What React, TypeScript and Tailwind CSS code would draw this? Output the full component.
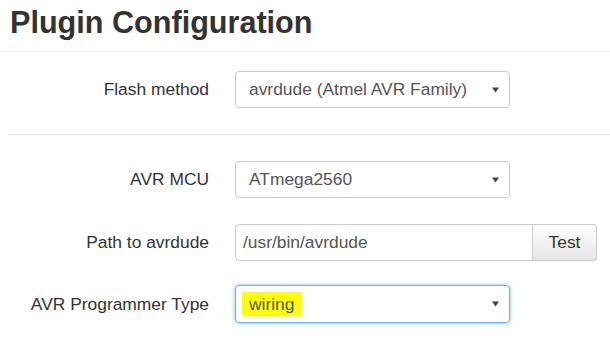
import React from "react";

const Caret = () => (
  <svg width="7" height="6" viewBox="0 0 7 6" className="shrink-0">
    <path d="M0 0.5 L7 0.5 L3.5 5.5 Z" fill="#444" />
  </svg>
);

const Row = ({ label, children, className = "" }: { label: string; children: React.ReactNode; className?: string }) => (
  <div className={`flex items-center ${className}`}>
    <div className="w-[209px] text-right text-[17.4px] text-[#333]">{label}</div>
    <div className="ml-[26px]">{children}</div>
  </div>
);

export default function App() {
  return (
    <div
      className="w-[610px] h-[344px] bg-white overflow-hidden"
      style={{ fontFamily: '"Liberation Sans", Arial, sans-serif' }}
    >
      <div className="pt-[4px] pb-[11px] pl-[10px] border-b border-[#eeeeee]">
        <h1 className="text-[30.6px] leading-[36px] font-bold text-[#333]">Plugin Configuration</h1>
      </div>

      <Row label="Flash method" className="mt-[19px]">
        <div className="w-[275px] h-[37px] border border-[#cccccc] rounded-[4px] flex items-center justify-between pl-[13px] pr-[10px] text-[17.4px] text-[#555]">
          <span>avrdude (Atmel AVR Family)</span>
          <Caret />
        </div>
      </Row>

      <div className="ml-[9px] mt-[26px] border-t border-[#e5e5e5]" />

      <Row label="AVR MCU" className="mt-[26px]">
        <div className="w-[275px] h-[37px] border border-[#cccccc] rounded-[4px] flex items-center justify-between pl-[13px] pr-[10px] text-[17.4px] text-[#555]">
          <span>ATmega2560</span>
          <Caret />
        </div>
      </Row>

      <Row label="Path to avrdude" className="mt-[26px]">
        <div className="flex h-[37px]">
          <div className="w-[298px] h-full border border-[#cccccc] rounded-l-[4px] flex items-center pl-[7px] text-[17.4px] text-[#555]">
            /usr/bin/avrdude
          </div>
          <div className="w-[64px] h-full border border-l-0 border-[#cccccc] rounded-r-[4px] flex items-center justify-center text-[17.4px] text-[#333] bg-gradient-to-b from-[#ffffff] to-[#e6e6e6]">
            Test
          </div>
        </div>
      </Row>

      <Row label="AVR Programmer Type" className="mt-[24px]">
        <div className="w-[275px] h-[38px] border border-[#66afe9] rounded-[4px] shadow-[0_0_4px_rgba(102,175,233,0.8)] flex items-center justify-between pl-[6px] pr-[10px] text-[17.4px] text-[#555]">
          <span className="bg-[#ffff00] px-[7px] h-[24px] flex items-center">wiring</span>
          <Caret />
        </div>
      </Row>
    </div>
  );
}
